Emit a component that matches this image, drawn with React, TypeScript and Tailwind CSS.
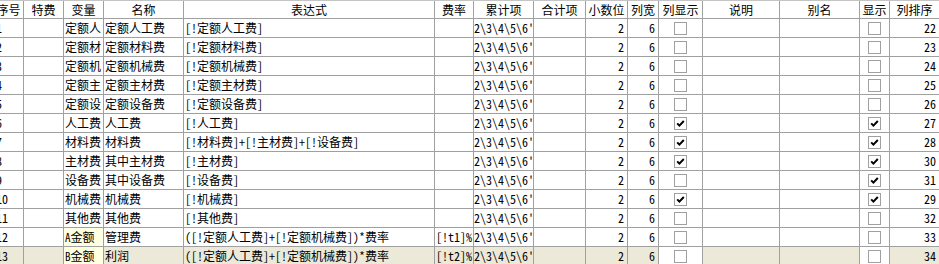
import React from "react";

type Col = { title: string; w: string };

const cols: Col[] = [
  { title: "序号", w: "w-[30px]" },
  { title: "特费", w: "w-[40px]" },
  { title: "变量", w: "w-[40px]" },
  { title: "名称", w: "w-[80px]" },
  { title: "表达式", w: "w-[251px]" },
  { title: "费率", w: "w-[39px]" },
  { title: "累计项", w: "w-[60px]" },
  { title: "合计项", w: "w-[52px]" },
  { title: "小数位", w: "w-[42px]" },
  { title: "列宽", w: "w-[31px]" },
  { title: "列显示", w: "w-[44px]" },
  { title: "说明", w: "w-[77px]" },
  { title: "别名", w: "w-[80px]" },
  { title: "显示", w: "w-[30px]" },
  { title: "列排序", w: "w-[50px]" },
];

type Row = {
  v: React.ReactNode;
  name: string;
  expr: string;
  rate: string;
  show: boolean;
  disp: boolean;
  order: number;
  yellow?: boolean;
};

const rows: Row[] = [
  { v: "定额人", name: "定额人工费", expr: "[!定额人工费]", rate: "", show: false, disp: false, order: 22 },
  { v: "定额材", name: "定额材料费", expr: "[!定额材料费]", rate: "", show: false, disp: false, order: 23 },
  { v: "定额机", name: "定额机械费", expr: "[!定额机械费]", rate: "", show: false, disp: false, order: 24 },
  { v: "定额主", name: "定额主材费", expr: "[!定额主材费]", rate: "", show: false, disp: false, order: 25 },
  { v: "定额设", name: "定额设备费", expr: "[!定额设备费]", rate: "", show: false, disp: false, order: 26 },
  { v: "人工费", name: "人工费", expr: "[!人工费]", rate: "", show: true, disp: true, order: 27 },
  { v: "材料费", name: "材料费", expr: "[!材料费]+[!主材费]+[!设备费]", rate: "", show: true, disp: true, order: 28 },
  { v: "主材费", name: "其中主材费", expr: "[!主材费]", rate: "", show: true, disp: true, order: 30 },
  { v: "设备费", name: "其中设备费", expr: "[!设备费]", rate: "", show: false, disp: true, order: 31 },
  { v: "机械费", name: "机械费", expr: "[!机械费]", rate: "", show: true, disp: true, order: 29 },
  { v: "其他费", name: "其他费", expr: "[!其他费]", rate: "", show: false, disp: false, order: 32 },
  {
    v: (<><span className="text-[11px]">A</span>金额</>),
    name: "管理费", expr: "([!定额人工费]+[!定额机械费])*费率", rate: "[!t1]%", show: false, disp: false, order: 33, yellow: true,
  },
  {
    v: (<><span className="text-[11px]">B</span>金额</>),
    name: "利润", expr: "([!定额人工费]+[!定额机械费])*费率", rate: "[!t2]%", show: false, disp: false, order: 34, yellow: true,
  },
];

function Check({ on }: { on: boolean }) {
  return (
    <div className="w-[13px] h-[13px] border border-[#a0a0a0] bg-white flex items-center justify-center">
      {on && (
        <svg width="9" height="9" viewBox="0 0 9 9">
          <path d="M1.2 4.4 L3.4 6.6 L7.8 2" fill="none" stroke="#000" strokeWidth="2" />
        </svg>
      )}
    </div>
  );
}

export default function App() {
  const cell = "h-full shrink-0 border-r border-[#a0a0a0] flex items-center overflow-hidden whitespace-nowrap";
  return (
    <div
      className="w-[939px] h-[264px] overflow-hidden bg-white text-black text-[12px] leading-[16px]"
      style={{ fontFamily: '"Noto Sans Mono CJK SC", "Noto Sans CJK SC", "Noto Sans", monospace' }}
    >
      <div className="-ml-[6px] w-max">
        {/* header */}
        <div className="flex h-[19px] border-t border-b border-t-[#c4c4c4] border-b-[#a0a0a0]">
          {cols.map((c) => (
            <div key={c.title} className={`${c.w} ${cell} justify-center`}>
              {c.title}
            </div>
          ))}
        </div>
        {rows.map((r, i) => {
          const last = i === rows.length - 1;
          const bg = last ? "bg-[#ece9d8]" : "bg-white";
          return (
            <div key={i} className={`flex h-[19px] border-b border-[#a0a0a0] ${bg}`}>
              <div className={`w-[30px] ${cell} pl-[2px]`}>{i + 1}</div>
              <div className={`w-[40px] ${cell}`}></div>
              <div className={`w-[40px] ${cell} pl-px ${r.yellow ? "bg-[#ffffe1]" : ""}`}>{r.v}</div>
              <div className={`w-[80px] ${cell} pl-px`}>{r.name}</div>
              <div className={`w-[251px] ${cell} pl-px`}>{r.expr}</div>
              <div className={`w-[39px] ${cell} pl-px`}>{r.rate}</div>
              <div className={`w-[60px] ${cell}`}>2\3\4\5\6'</div>
              <div className={`w-[52px] ${cell}`}></div>
              <div className={`w-[42px] ${cell} justify-end pr-[3px]`}>2</div>
              <div className={`w-[31px] ${cell} justify-end pr-[3px]`}>6</div>
              <div className={`w-[44px] ${cell} justify-center bg-white`}>
                <Check on={r.show} />
              </div>
              <div className={`w-[77px] ${cell}`}></div>
              <div className={`w-[80px] ${cell}`}></div>
              <div className={`w-[30px] ${cell} justify-center bg-white`}>
                <Check on={r.disp} />
              </div>
              <div className={`w-[50px] ${cell} justify-end pr-[3px]`}>{r.order}</div>
            </div>
          );
        })}
      </div>
    </div>
  );
}
